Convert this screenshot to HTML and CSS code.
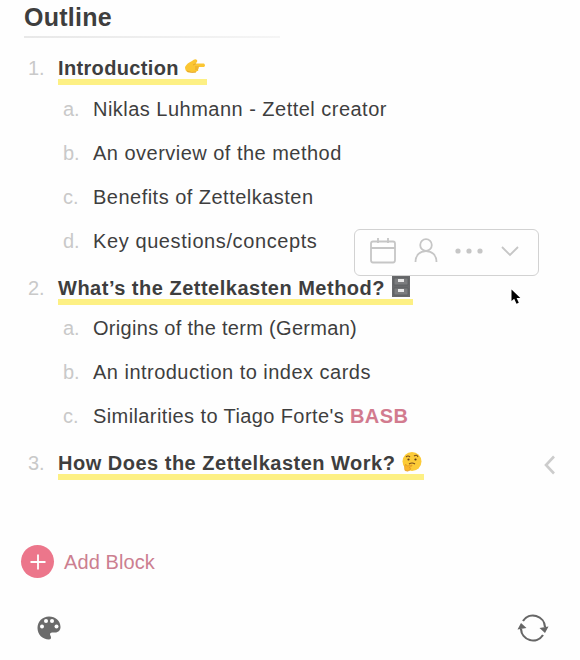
FILE: index.html
```html
<!DOCTYPE html>
<html lang="en">
<head>
  <meta charset="UTF-8" />
  <meta name="viewport" content="width=device-width, initial-scale=1.0" />
  <title>Outline</title>
  <link rel="stylesheet" href="styles.css">
</head>
<body>
  <main class="page">
    <h1>Outline</h1>
    <hr class="divider">

    <section>
      <h2><span class="marker">1.</span><span class="highlight w1"><span class="label">Introduction</span><svg class="emoji" viewBox="0 0 20 20"><path d="M0 10Q2 6 7 4Q10 1 12 3Q13 5 10 6.500H19Q21 8.500 19 10H13Q15 11 13 12Q14 14 12 14Q11 16 8 15.500L3 15.500Q0 14 0 10Z" fill="#fbc632"/><path d="M8 8L11 6.500M10 10H14M10 12H13M2 14Q7 16.500 11 15" fill="none" stroke="#e0a02a" stroke-width=".8"/></svg></span></h2>
      <ul>
        <li><span class="marker">a.</span><span class="text">Niklas Luhmann - Zettel creator</span></li>
        <li><span class="marker">b.</span><span class="text">An overview of the method</span></li>
        <li><span class="marker">c.</span><span class="text">Benefits of Zettelkasten</span></li>
        <li><span class="marker">d.</span><span class="text loose">Key questions/concepts</span></li>
      </ul>
    </section>

    <section>
      <h2><span class="marker">2.</span><span class="highlight w2"><span class="label">What’s the Zettelkasten Method?</span><svg class="emoji" viewBox="0 0 20 20"><path d="M1 -1H19V20H1Z" fill="#68696b"/><path d="M3 1H17V8H3ZM3 11H17V18H3Z" fill="#7b7c7e" stroke="#5c5d5f" stroke-width=".8"/><path d="M7 2H13V5H7ZM7 12H13V15H7Z" fill="#e6e6e6"/></svg></span></h2>
      <ul>
        <li><span class="marker">a.</span><span class="text tight">Origins of the term (German)</span></li>
        <li><span class="marker">b.</span><span class="text">An introduction to index cards</span></li>
        <li><span class="marker">c.</span><span class="text medium">Similarities to Tiago Forte's <b>BASB</b></span></li>
      </ul>
    </section>

    <section>
      <h2><span class="marker">3.</span><span class="highlight w3"><span class="label">How Does the Zettelkasten Work?</span><svg class="emoji" viewBox="0 0 20 20"><circle cx="10" cy="9.500" r="9.500" fill="#fccb38"/><path d="M4 5Q6 3 8 5M12 4Q15 2 16 5M7 12Q10 10 13 12" fill="none" stroke="#7a4d1c" stroke-width="1.100"/><circle cx="6.500" cy="7.500" r="1.100" fill="#5e3b18"/><circle cx="13.500" cy="7.500" r="1.100" fill="#5e3b18"/><path d="M3 13Q4 11 5 14L10 13Q11 14 7 15.500Q10 16 8 18Q6 20 3 18.500Q2 17 3 13Z" fill="#f9b52c" stroke="#de9425" stroke-width=".6"/></svg></span></h2>
    </section>

    <button class="add-block">
      <span class="plus"><svg width="16" height="16" viewBox="0 0 16 16"><path d="M8 .5V15.500M.5 8H15.500" stroke="#fff" stroke-width="1.800"/></svg></span>
      Add Block
    </button>

    <footer>
      <svg width="24" height="24" viewBox="0 0 24 24"><path d="M12 .5C5.500 .5 .5 5.500 .5 12S5.500 23.500 12 23.500C13.500 23.500 14 22.500 14 21.500C14 20 13 19.500 13 18.300C13 17.200 14 16.500 15 16.500H18C21.500 16.500 23.500 14 23.500 11C23.500 5 18.500 .5 12 .5Z" fill="#6b6b6b"/><g fill="#fff"><circle cx="5" cy="10.500" r="2"/><circle cx="9" cy="5" r="2"/><circle cx="15" cy="5" r="2"/><circle cx="19.500" cy="10.500" r="2"/></g></svg>
      <svg width="32" height="28" viewBox="0 0 32 28"><path d="M6 7A12 12 0 0 1 28 13M26 21A12 12 0 0 1 4 15" fill="none" stroke="#666" stroke-width="2.200"/><path d="M22.500 14L31.500 12.500L28 19ZM.5 15.500L9.500 14L4 9Z" fill="#666"/></svg>
    </footer>
  </main>

  <div class="toolbar">
    <svg width="26" height="26" viewBox="0 0 26 26"><path d="M3 3.500H23Q25 3.500 25 5.500V22Q25 24.500 23 24.500H3Q1 24.500 1 22V5.500Q1 3.500 3 3.500ZM1 10H25M8 0V5M18 0V5"/></svg>
    <svg width="24" height="26" viewBox="0 0 24 26"><circle cx="12" cy="7" r="5.800"/><path d="M1.500 24C1.500 17 6 13.200 12 13.200S22.500 17 22.500 24"/></svg>
    <svg class="dots" width="28" height="6" viewBox="0 0 28 6"><circle cx="3" cy="3" r="2.600"/><circle cx="14" cy="3" r="2.600"/><circle cx="25" cy="3" r="2.600"/></svg>
    <svg width="18" height="11" viewBox="0 0 18 11"><path d="M1 1L9 9L17 1"/></svg>
  </div>
  <svg class="cursor" width="10" height="16" viewBox="0 0 10 16"><path d="M.5 .5V12L3.200 9.800L5.500 14.800L7.800 13.700L5.600 9H9.300Z" fill="#000"/></svg>
  <svg class="collapse" width="13" height="20" viewBox="0 0 13 20"><path d="M11 1.500L3 10L11 18.500" fill="none" stroke="#ccc" stroke-width="2.600"/></svg>
</body>
</html>
```
FILE: styles.css
```css
* {
  box-sizing: border-box;
}

body {
  margin: 0;
  height: 660px;
  position: relative;
  overflow: hidden;
  background-color: #fefefe;
  font-family: "Liberation Sans", Arial, sans-serif;
  font-size: 20px;
  color: #3e3e3e;
}

.page {
  height: 660px;
  display: flex;
  flex-direction: column;
  padding: 3px 31px 18px 24px;
}

h1 {
  margin: 0;
  height: 33px;
  font-size: 25px;
  line-height: 29px;
  letter-spacing: 0.25px;
}

.divider {
  width: 256px;
  height: 2px;
  margin: 0 0 6px;
  border: none;
  background: linear-gradient(to right, #e8e8e8, #f5f5f5);
}

h2 {
  display: flex;
  margin: 0;
  height: 43px;
  padding: 13px 0 0 4px;
  font-size: 20px;
  line-height: 22px;
}

section + section h2 {
  padding-top: 14px;
}

.marker {
  color: #c9c9c9;
  font-weight: normal;
}

h2 .marker {
  width: 30px;
}

.highlight {
  display: flex;
  height: 28px;
  justify-content: space-between;
  border-bottom: 6px solid #fdf084;
}

.w1 {
  width: 149px;
}

.w2 {
  width: 355px;
}

.w3 {
  width: 366px;
}

.label {
  white-space: nowrap;
  letter-spacing: 0.5px;
}

.w1 .label {
  letter-spacing: 0.35px;
}

.emoji {
  width: 20px;
  height: 20px;
  margin-right: 2px;
  overflow: visible;
}

ul {
  list-style: none;
  margin: 0;
  padding: 0 0 0 39px;
}

li {
  display: flex;
  height: 44px;
  line-height: 44px;
}

li .marker {
  width: 30px;
}

.text {
  letter-spacing: 0.48px;
  white-space: nowrap;
}

.tight {
  letter-spacing: 0.3px;
}

.medium {
  letter-spacing: 0.4px;
}

.loose {
  letter-spacing: 0.6px;
}

.text b {
  color: #d27b8f;
}

.add-block {
  display: flex;
  align-items: center;
  gap: 10px;
  margin: 64px 0 0 -3px;
  padding: 0;
  border: none;
  background: none;
  color: #cc7f90;
  font-family: inherit;
  font-size: 20px;
  line-height: 24px;
  letter-spacing: 0.1px;
}

.plus {
  display: flex;
  align-items: center;
  justify-content: center;
  width: 33px;
  height: 33px;
  border-radius: 50%;
  background-color: #ec768b;
}

footer {
  display: flex;
  align-items: center;
  justify-content: space-between;
  margin-top: auto;
  padding-left: 13px;
}

.toolbar {
  position: absolute;
  left: 354px;
  top: 229px;
  width: 185px;
  height: 47px;
  display: flex;
  align-items: center;
  justify-content: space-between;
  padding: 0 19px 3px 15px;
  border: 1px solid #d2d2d2;
  border-radius: 6px;
}

.toolbar svg {
  fill: none;
  stroke: #c6c6c6;
  stroke-width: 1.8;
}

.toolbar .dots {
  fill: #c6c6c6;
  stroke: none;
}

.cursor {
  position: absolute;
  left: 511px;
  top: 289px;
}

.collapse {
  position: absolute;
  left: 543px;
  top: 455px;
}
```
